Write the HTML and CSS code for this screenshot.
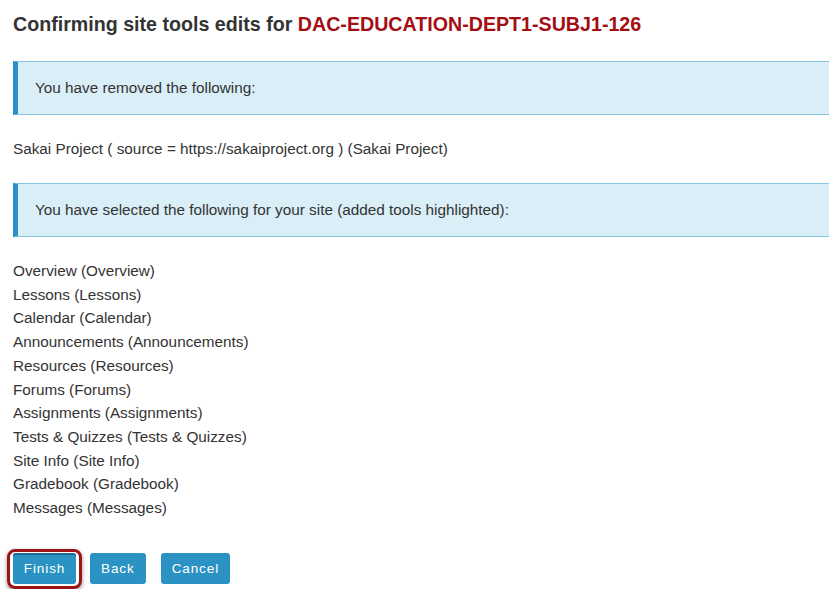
FILE: index.html
```html
<!DOCTYPE html>
<html>
<head>
<meta charset="utf-8">
<link rel="stylesheet" href="styles.css">
</head>
<body>
<div class="page">
  <h3 class="title">Confirming site tools edits for <span class="site">DAC-EDUCATION-DEPT1-SUBJ1-126</span></h3>
  <div class="info">You have removed the following:</div>
  <p class="removed">Sakai Project ( source = https://sakaiproject.org ) (Sakai Project)</p>
  <div class="info">You have selected the following for your site (added tools highlighted):</div>
  <ul class="tools">
    <li>Overview (Overview)</li>
    <li>Lessons (Lessons)</li>
    <li>Calendar (Calendar)</li>
    <li>Announcements (Announcements)</li>
    <li>Resources (Resources)</li>
    <li>Forums (Forums)</li>
    <li>Assignments (Assignments)</li>
    <li>Tests &amp; Quizzes (Tests &amp; Quizzes)</li>
    <li>Site Info (Site Info)</li>
    <li>Gradebook (Gradebook)</li>
    <li>Messages (Messages)</li>
  </ul>
  <div class="actions">
    <span class="ring"><button class="btn btn-focus">Finish</button></span>
    <button class="btn">Back</button>
    <button class="btn">Cancel</button>
  </div>
</div>
</body>
</html>
```
FILE: styles.css
```css
html, body {
  margin: 0;
  padding: 0;
  background: #fff;
  overflow: hidden;
}
body {
  font-family: "Liberation Sans", Arial, sans-serif;
  color: #333;
  font-size: 15.3px;
}
.page {
  padding: 0 0 0 13px;
}
.title {
  margin: 0;
  padding-top: 12px;
  font-size: 19.65px;
  font-weight: bold;
  line-height: 24px;
  color: #333;
}
.site {
  color: #a30d13;
}
.info {
  margin-top: 25px;
  background: #d9eef7;
  border-top: 1px solid #86c5e4;
  border-bottom: 1px solid #86c5e4;
  border-left: 5px solid #2b93c3;
  height: 52px;
  padding-left: 17px;
  display: flex;
  align-items: center;
  color: #333;
}
.removed {
  margin: 24px 0 0 0;
  line-height: 20px;
}
.removed + .info {
  margin-top: 24px;
}
.tools {
  list-style: none;
  margin: 22px 0 0 0;
  padding: 0;
}
.tools li {
  line-height: 23.7px;
}
.actions {
  margin-top: 29px;
  display: flex;
  align-items: center;
}
.ring {
  display: inline-flex;
  margin-left: -6px;
  padding: 1px 3px 2px 3px;
  border: 3px solid #9d1417;
  border-radius: 8px;
  box-shadow: 0 2px 4px rgba(0,0,0,0.45);
}
.btn {
  font-family: "Liberation Sans", Arial, sans-serif;
  font-size: 13.5px;
  letter-spacing: 0.9px;
  color: #fff;
  background: #2b93c3;
  border: none;
  border-radius: 3px;
  height: 31px;
  padding: 0 11px;
  margin-left: 15px;
}
.ring .btn {
  margin-left: 0;
}
.btn-focus {
  box-shadow: inset 0 2px 0 #1c6a90;
  padding: 0;
  width: 63px;
  height: 31px;
  border-radius: 3px;
}
.ring + .btn {
  margin-left: 8px;
}
```
